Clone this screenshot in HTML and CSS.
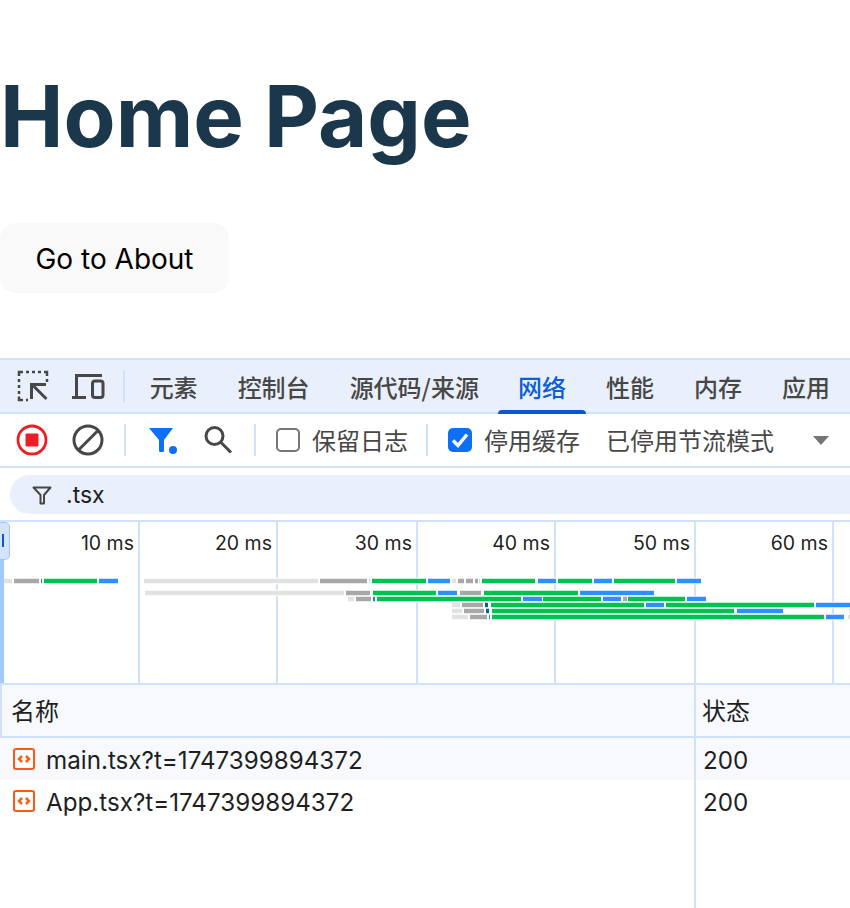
FILE: index.html
```html
<!DOCTYPE html>
<html lang="zh">
<head>
<meta charset="utf-8">
<title>Home Page</title>
<link rel="stylesheet" href="styles.css">
</head>
<body>
<main class="hero">
  <h1 class="title">Home Page</h1>
  <button class="about-btn">Go to About</button>
</main>
<section class="devtools">
  <div class="tabbar">
    <div class="tab-icons">
      <svg class="icon" width="32" height="32" viewBox="0 0 32 32"><path class="ic-dash" d="M2 6V2H6M9 2h3M15 2h3M21 2h3M27 2h3V6M2 9v3M2 15v3M2 21v3M2 26.500V30H6M9 30h2M30 9v3"/><path class="ic-line" d="M29.500 29 L16 15.500 M14.500 29 V14.500 H29"/></svg>
      <svg class="icon icon-device" width="34" height="28" viewBox="0 0 34 28"><path class="ic-line" d="M1 25.500H15M5.500 25V3.500H31"/><rect class="ic-line" x="21.500" y="9" width="10.500" height="16.500" rx="2.500"/></svg>
    </div>
    <span class="vsep"></span>
    <nav class="tabs">
      <span class="tab">元素</span>
      <span class="tab">控制台</span>
      <span class="tab tab-source">源代码/来源</span>
      <span class="tab tab-active">网络</span>
      <span class="tab">性能</span>
      <span class="tab">内存</span>
      <span class="tab">应用</span>
    </nav>
  </div>
  <div class="toolbar">
    <svg class="tool tool-record" width="32" height="32" viewBox="0 0 32 32"><circle class="rec-ring" cx="16" cy="16" r="14"/><rect class="rec-dot" x="9.500" y="9.500" width="13" height="13" rx="1"/></svg>
    <svg class="tool tool-clear" width="32" height="32" viewBox="0 0 32 32"><circle class="ic-line" cx="16" cy="16" r="14"/><path class="ic-line" d="M6.500 26 26 6.500"/></svg>
    <span class="vsep vsep-a"></span>
    <svg class="tool tool-funnel" width="30" height="30" viewBox="0 0 30 30"><path class="fn-fill" d="M0 3H24L15 15V25.500A1.500 1.500 0 0 1 13.500 27H11.500A1.500 1.500 0 0 1 10 25.500V15Z"/><circle class="fn-fill" cx="24" cy="25" r="4"/></svg>
    <svg class="tool tool-search" width="30" height="30" viewBox="0 0 30 30"><circle class="ic-line" cx="11.500" cy="11" r="8.500"/><path class="ic-line" d="M17.500 17 28 27.500"/></svg>
    <span class="vsep vsep-b"></span>
    <span class="check check-off"></span>
    <span class="tool-label label-keep">保留日志</span>
    <span class="vsep vsep-c"></span>
    <span class="check check-on"><svg width="24" height="24" viewBox="0 0 24 24"><path class="check-mark" d="M5 12.500 10 17.500 19 6.500"/></svg></span>
    <span class="tool-label label-cache">停用缓存</span>
    <span class="tool-label label-throttle">已停用节流模式</span>
    <svg class="caret" width="16" height="9" viewBox="0 0 16 9"><path class="caret-fill" d="M0 0H16L8 9Z"/></svg>
  </div>
  <div class="filterbar">
    <div class="filter-input">
      <svg width="20" height="20" viewBox="0 0 20 20"><path class="ic-thin" d="M1.500 2.500H18.500L12 10V18.500H8.500V10Z"/></svg>
      <span class="filter-text">.tsx</span>
    </div>
  </div>
  <div class="overview">
    <div class="ticks">
      <span class="tick tick-w">10 ms</span>
      <span class="tick tick-n">20 ms</span>
      <span class="tick tick-w">30 ms</span>
      <span class="tick tick-n">40 ms</span>
      <span class="tick tick-w">50 ms</span>
      <span class="tick tick-n">60 ms</span>
    </div>
    <svg class="bars" width="850" height="161" viewBox="0 522 850 161">
      <g class="seg-row" transform="translate(0 578.750)">
        <rect class="l" x="4" width="8" height="4.500"/><rect class="g" x="14" width="25" height="4.500"/><rect class="t" x="41" width="1" height="4.500"/><rect class="n" x="44" width="53" height="4.500"/><rect class="b" x="99" width="19" height="4.500"/>
        <rect class="l" x="144" width="174" height="4.500"/><rect class="g" x="320" width="47" height="4.500"/><rect class="c" x="369" width="1" height="4.500"/><rect class="n" x="372" width="54" height="4.500"/><rect class="b" x="428" width="22" height="4.500"/><rect class="l" x="452" width="4" height="4.500"/><rect class="g" x="458" width="6" height="4.500"/><rect class="g" x="466" width="7" height="4.500"/><rect class="g" x="475" width="3" height="4.500"/><rect class="c" x="479" width="1" height="4.500"/><rect class="n" x="482" width="53" height="4.500"/><rect class="b" x="538" width="18" height="4.500"/><rect class="n" x="558" width="34" height="4.500"/><rect class="b" x="594" width="18" height="4.500"/><rect class="n" x="614" width="61" height="4.500"/><rect class="b" x="677" width="24" height="4.500"/>
      </g>
      <g class="seg-row" transform="translate(0 590.750)">
        <rect class="l" x="145" width="199" height="4.500"/><rect class="g" x="346" width="24" height="4.500"/><rect class="n" x="373" width="63" height="4.500"/><rect class="b" x="438" width="19" height="4.500"/><rect class="g" x="460" width="21" height="4.500"/><rect class="n" x="484" width="94" height="4.500"/><rect class="b" x="580" width="74" height="4.500"/>
      </g>
      <g class="seg-row" transform="translate(0 596.750)">
        <rect class="l" x="348" width="6" height="4.500"/><rect class="g" x="356" width="15" height="4.500"/><rect class="t" x="373" width="2" height="4.500"/><rect class="n" x="377" width="144" height="4.500"/><rect class="b" x="523" width="19" height="4.500"/><rect class="n" x="543" width="58" height="4.500"/><rect class="b" x="603" width="18" height="4.500"/><rect class="g" x="623" width="4" height="4.500"/><rect class="n" x="628" width="57" height="4.500"/><rect class="b" x="687" width="19" height="4.500"/>
      </g>
      <g class="seg-row" transform="translate(0 602.750)">
        <rect class="l" x="452" width="8" height="4.500"/><rect class="g" x="462" width="21" height="4.500"/><rect class="d" x="485" width="3" height="4.500"/><rect class="n" x="491" width="153" height="4.500"/><rect class="b" x="646" width="18" height="4.500"/><rect class="n" x="666" width="148" height="4.500"/><rect class="b" x="816" width="34" height="4.500"/>
      </g>
      <g class="seg-row" transform="translate(0 608.750)">
        <rect class="l" x="452" width="10" height="4.500"/><rect class="g" x="464" width="20" height="4.500"/><rect class="d" x="486" width="3" height="4.500"/><rect class="n" x="492" width="242" height="4.500"/><rect class="b" x="737" width="46" height="4.500"/><rect class="l" x="849" width="1" height="4.500"/>
      </g>
      <g class="seg-row" transform="translate(0 614.750)">
        <rect class="l" x="452" width="16" height="4.500"/><rect class="g" x="470" width="17" height="4.500"/><rect class="t" x="489" width="1" height="4.500"/><rect class="n" x="492" width="332" height="4.500"/><rect class="b" x="826" width="18" height="4.500"/><rect class="l" x="848" width="2" height="4.500"/>
      </g>
    </svg>
    <div class="range-strip"></div>
    <div class="range-handle"><span class="handle-tick"></span></div>
  </div>
  <div class="table">
    <div class="trow thead">
      <div class="cell cell-name">名称</div>
      <div class="cell cell-status">状态</div>
    </div>
    <div class="trow tint">
      <div class="cell cell-name"><svg class="file-icon" width="22" height="22" viewBox="0 0 22 22"><rect class="file-box" x="1" y="1" width="20" height="20" rx="2"/><path class="file-code" d="M9 8 6 11 9 14M13 8 16 11 13 14"/></svg>main.tsx?t=1747399894372</div>
      <div class="cell cell-status">200</div>
    </div>
    <div class="trow">
      <div class="cell cell-name"><svg class="file-icon" width="22" height="22" viewBox="0 0 22 22"><rect class="file-box" x="1" y="1" width="20" height="20" rx="2"/><path class="file-code" d="M9 8 6 11 9 14M13 8 16 11 13 14"/></svg>App.tsx?t=1747399894372</div>
      <div class="cell cell-status">200</div>
    </div>
    <div class="trow tfill">
      <div class="cell cell-name"></div>
      <div class="cell cell-status"></div>
    </div>
  </div>
</section>
</body>
</html>
```

FILE: styles.css
```css
* { box-sizing: border-box; }
html, body { margin: 0; padding: 0; }
body {
  width: 850px;
  height: 908px;
  overflow: hidden;
  background: #fff;
  font-family: Inter, "Noto Sans CJK SC", sans-serif;
  display: flex;
  flex-direction: column;
}
.hero {
  height: 358px;
  flex: none;
  padding-top: 69px;
}
.title {
  margin: 0;
  font-size: 85px;
  line-height: 96px;
  font-weight: 700;
  color: #1b374b;
}
.about-btn {
  display: block;
  margin-top: 58px;
  width: 229px;
  height: 70px;
  border: 0;
  border-radius: 16px;
  background: #f9f9f9;
  color: #000;
  font: 400 28px Inter, sans-serif;
  padding: 2px 0 0;
}
.devtools {
  flex: 1;
  min-height: 0;
  display: flex;
  flex-direction: column;
  color: #474747;
  font-family: "Noto Sans CJK SC", Inter, sans-serif;
}
.tabbar {
  height: 56px;
  flex: none;
  display: flex;
  align-items: center;
  background: #e9f0fb;
  border-top: 2px solid #d0e2fb;
  border-bottom: 2px solid #d0e2fb;
}
.tab-icons {
  display: flex;
  align-items: center;
  gap: 24px;
  width: 124px;
  padding-left: 17px;
}
.icon-device { margin-left: -2px; }
.vsep {
  flex: none;
  width: 2px;
  height: 32px;
  background: #d0e2fb;
}
.tabs {
  display: flex;
  align-self: stretch;
  margin-left: 5px;
}
.tab {
  display: flex;
  align-items: center;
  padding: 0 20px;
  font-size: 24px;
  font-weight: 500;
  white-space: nowrap;
  position: relative;
}
.tab-source { margin-right: -1px; }
.tab-active { color: #0a5ddb; }
.tab-active::after {
  content: "";
  position: absolute;
  left: 0;
  right: 0;
  bottom: -2px;
  height: 4px;
  background: #0b57d0;
  border-radius: 4px 4px 0 0;
}
.toolbar {
  height: 54px;
  flex: none;
  display: flex;
  align-items: center;
  border-bottom: 2px solid #d0e2fb;
}
.tool { flex: none; }
.tool-record { margin-left: 16px; }
.tool-clear { margin-left: 24px; }
.vsep-a { margin-left: 20px; }
.tool-funnel { margin-left: 23px; }
.tool-search { margin-left: 24px; }
.vsep-b { margin-left: 21px; }
.check {
  flex: none;
  width: 24px;
  height: 24px;
  border-radius: 5px;
  margin-left: 20px;
}
.check-off { border: 2px solid #747775; }
.check-on {
  margin-left: 20px;
  background: #0b70f5;
}
.check-on svg { display: block; }
.tool-label {
  font-size: 24px;
  line-height: 32px;
  white-space: nowrap;
}
.label-keep { margin-left: 12px; }
.vsep-c { margin-left: 18px; }
.label-cache { margin-left: 12px; }
.label-throttle { margin-left: 26px; }
.caret { margin-left: 39px; flex: none; }
.filterbar {
  height: 54px;
  flex: none;
  padding: 7px 0 6px 10px;
  border-bottom: 2px solid #d0e2fb;
}
.filter-input {
  height: 39px;
  background: #e9f0fb;
  border-radius: 20px 0 0 20px;
  display: flex;
  align-items: center;
  padding-left: 22px;
  gap: 14px;
}
.filter-text {
  font: 400 23px Inter, sans-serif;
  color: #1f1f1f;
}
.overview {
  height: 161px;
  flex: none;
  position: relative;
  overflow: hidden;
}
.ticks {
  display: flex;
  height: 100%;
}
.tick {
  flex: none;
  height: 100%;
  padding: 8px 4px 0 0;
  text-align: right;
  border-right: 2px solid #d0e2fb;
  font: 400 19.500px/26px Inter, sans-serif;
  color: #1f1f1f;
  white-space: nowrap;
}
.tick-w { width: 140px; }
.tick-n { width: 138px; }
.bars {
  position: absolute;
  left: 0;
  top: 0;
}
.seg-row rect {
  stroke: #fff;
  stroke-width: 2;
  paint-order: stroke;
}
.l { fill: #e2e3e1; }
.g { fill: #a8a8a8; }
.t { fill: #0b97b8; }
.c { fill: #b7e4ec; }
.d { fill: #00668a; }
.n { fill: #00c250; }
.b { fill: #2e8fff; }
.range-strip {
  position: absolute;
  left: 0;
  top: 38px;
  bottom: 0;
  width: 4px;
  background: #a3c8ff;
}
.range-handle {
  position: absolute;
  left: 0;
  top: 0;
  width: 10px;
  height: 38px;
  background: #d3e3fd;
  border: 1px solid #a3c8ff;
  border-left: 0;
  border-radius: 0 5px 5px 0;
}
.handle-tick {
  position: absolute;
  left: 2px;
  top: 11px;
  width: 2px;
  height: 13px;
  background: #0b57d0;
}
.table {
  flex: 1;
  min-height: 0;
  display: flex;
  flex-direction: column;
  border-top: 2px solid #d0e2fb;
  color: #1f1f1f;
  font: 400 24.200px Inter, "Noto Sans CJK SC", sans-serif;
}
.trow {
  display: flex;
  height: 42px;
  flex: none;
}
.thead {
  height: 53px;
  background: #f7f9fd;
  border-bottom: 2px solid #d0e2fb;
  border-left: 2px solid #d0e2fb;
  font-family: "Noto Sans CJK SC", Inter, sans-serif;
  font-size: 24px;
}
.tint { background: #f7f9fd; }
.tfill { flex: 1; }
.cell {
  display: flex;
  align-items: center;
  white-space: nowrap;
  padding-top: 2px;
}
.thead .cell {
  padding-top: 0;
  padding-bottom: 3px;
}
.cell-name {
  width: 694px;
  flex: none;
  padding-left: 13px;
  gap: 11px;
}
.thead .cell-name {
  width: 692px;
  padding-left: 9px;
}
.cell-status {
  flex: 1;
  padding-left: 7px;
  border-left: 2px solid #d0e2fb;
}
.thead .cell-status { padding-left: 6px; }
.file-icon {
  flex: none;
  margin-top: -2px;
}
.ic-line { fill: none; stroke: #474747; stroke-width: 3; }
.ic-dash { fill: none; stroke: #474747; stroke-width: 2.500; }
.ic-thin { fill: none; stroke: #474747; stroke-width: 2; stroke-linejoin: round; }
.rec-ring { fill: none; stroke: #ee1c25; stroke-width: 2.800; }
.rec-dot { fill: #ee1c25; }
.fn-fill { fill: #0b70f5; }
.check-mark { fill: none; stroke: #fff; stroke-width: 3.500; }
.caret-fill { fill: #757575; }
.file-box { fill: #fff; stroke: #fa5a14; stroke-width: 2; }
.file-code { fill: none; stroke: #fa5a14; stroke-width: 2.500; }
```
